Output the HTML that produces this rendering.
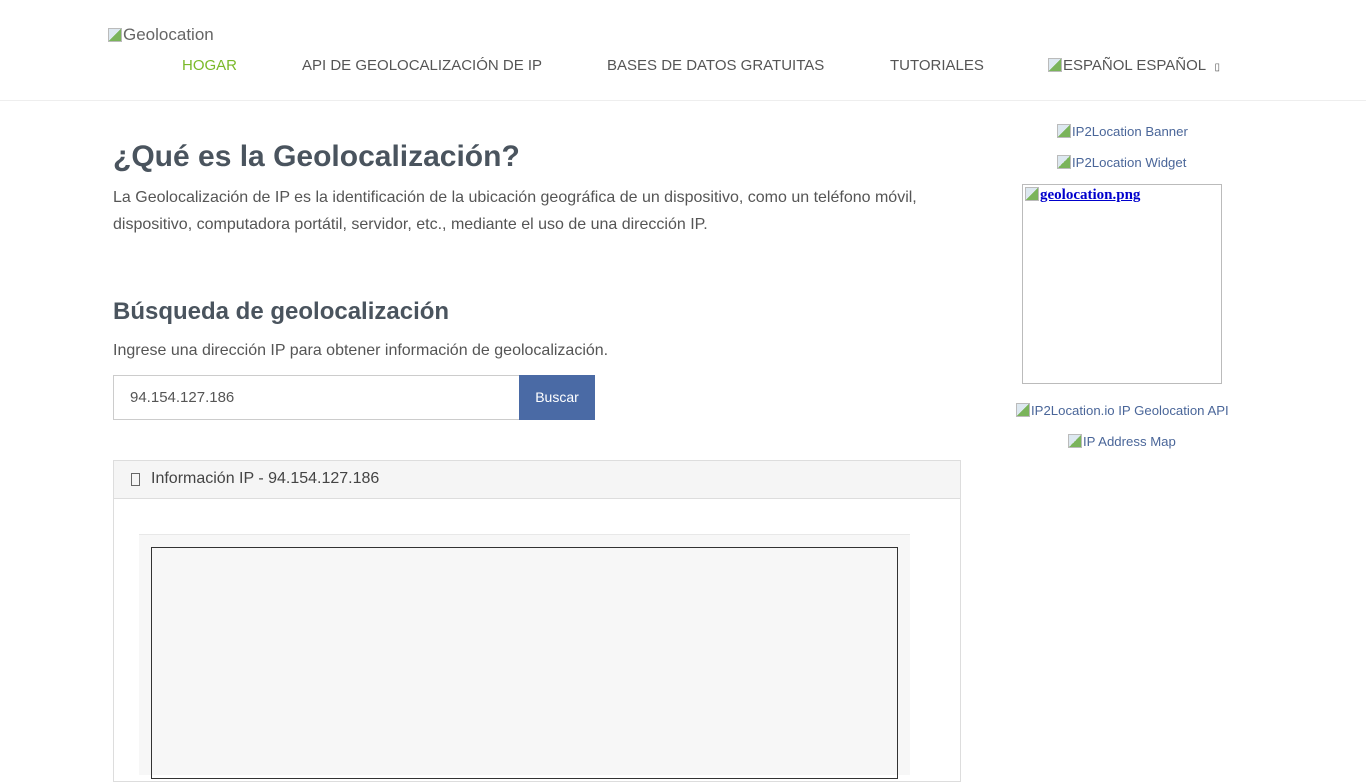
<!DOCTYPE html>
<html><head><meta charset="utf-8"><style>
body{margin:0;background:#fff;font-family:"Liberation Sans",sans-serif;color:#555;width:1366px;height:768px;overflow:hidden;position:relative}
.a{position:absolute;white-space:nowrap}
.nav{font-size:15px;color:#555;top:57px}
.side{font-size:13.2px;color:#4a6699}
i.b{display:inline-block;width:14px;height:14px;vertical-align:-2px;background:linear-gradient(135deg,#dde8f0 50%,#7ab45a 50%);border:1px solid #bbb;box-sizing:border-box;margin-right:1px}
</style></head><body>
<div class="a" style="left:108px;top:25px;font-size:17px;color:#666"><i class="b"></i>Geolocation</div>
<div class="a nav" style="left:182px;color:#7ab929">HOGAR</div>
<div class="a nav" style="left:302px">API DE GEOLOCALIZACIÓN DE IP</div>
<div class="a nav" style="left:607px">BASES DE DATOS GRATUITAS</div>
<div class="a nav" style="left:890px">TUTORIALES</div>
<div class="a nav" style="left:1048px"><i class="b"></i>ESPAÑOL ESPAÑOL&nbsp;&nbsp;<span style="font-size:10px">▯</span></div>
<div class="a" style="left:0;top:100px;width:1366px;height:1px;background:#eee"></div>

<div class="a" style="left:113px;top:140px;font-size:30px;font-weight:bold;color:#4a545e">¿Qué es la Geolocalización?</div>
<div class="a" style="left:113px;top:184px;font-size:16px;line-height:27px;color:#555">La Geolocalización de IP es la identificación de la ubicación geográfica de un dispositivo, como un teléfono móvil,<br>dispositivo, computadora portátil, servidor, etc., mediante el uso de una dirección IP.</div>
<div class="a" style="left:113px;top:298px;font-size:24px;font-weight:bold;color:#4a545e">Búsqueda de geolocalización</div>
<div class="a" style="left:113px;top:342px;font-size:16px">Ingrese una dirección IP para obtener información de geolocalización.</div>
<div class="a" style="left:113px;top:375px;height:43px;border:1px solid #ccc;font-size:15px;line-height:43px;padding-left:16px;width:390px">94.154.127.186</div>
<div class="a" style="left:519px;top:375px;width:76px;height:45px;background:#4a6aa5;color:#fff;font-size:14px;line-height:45px;text-align:center">Buscar</div>

<div class="a" style="left:113px;top:460px;width:846px;height:320px;border:1px solid #ddd"></div>
<div class="a" style="left:114px;top:461px;width:846px;height:37px;background:#f5f5f5;border-bottom:1px solid #ddd"></div>
<div class="a" style="left:131px;top:473px;width:7px;height:11px;border:1px solid #666"></div>
<div class="a" style="left:151px;top:470px;font-size:16px;color:#444">Información IP - 94.154.127.186</div>
<div class="a" style="left:139px;top:534px;width:771px;height:240px;background:#f7f7f7;border-top:1px solid #e8e8e8"></div>
<div class="a" style="left:151px;top:547px;width:745px;height:230px;border:1px solid #333"></div>

<div class="a side" style="left:1057px;top:124px"><i class="b"></i>IP2Location Banner</div>
<div class="a side" style="left:1057px;top:155px"><i class="b"></i>IP2Location Widget</div>
<div class="a" style="left:1022px;top:184px;width:198px;height:198px;border:1px solid #bbb"></div>
<div class="a" style="left:1025px;top:187px;font-family:'Liberation Serif',serif;font-size:15px;color:#00c;font-weight:bold;text-decoration:underline"><i class="b"></i>geolocation.png</div>
<div class="a side" style="left:1016px;top:403px"><i class="b"></i>IP2Location.io IP Geolocation API</div>
<div class="a side" style="left:1068px;top:434px"><i class="b"></i>IP Address Map</div>
</body></html>
